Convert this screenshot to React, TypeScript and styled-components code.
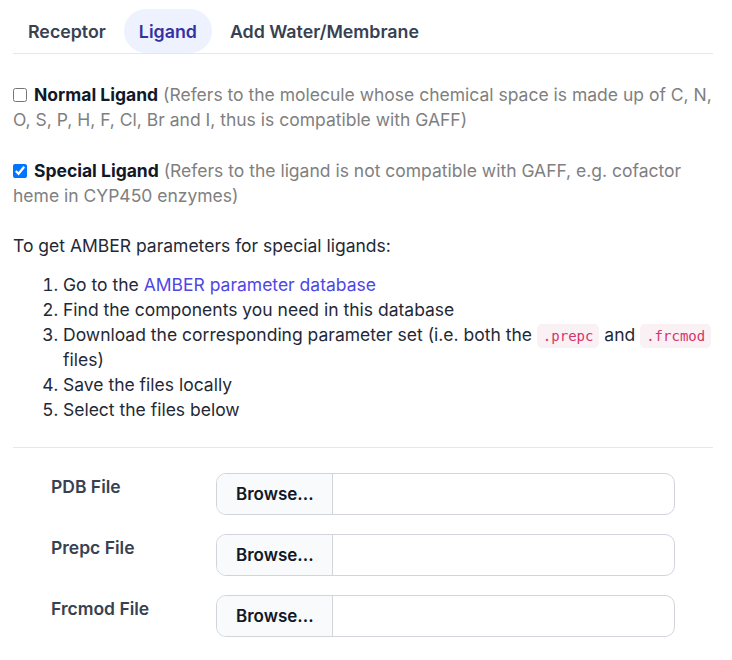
import React from "react";
import styled, { createGlobalStyle } from "styled-components";

const Global = createGlobalStyle`
  html, body { margin: 0; padding: 0; background: #fff; }
  body { font-family: Inter, "Noto Sans", sans-serif; color: #1f2937; }
`;

const Page = styled.div`
  padding: 9px 17px 0 13px;
  font-size: 17.5px;
  line-height: 25px;
`;

const TabList = styled.div`
  display: flex;
  gap: 3px;
  margin-right: 2px;
  border-bottom: 1px solid #e5e7eb;
`;

const Tab = styled.div<{ $active?: boolean }>`
  height: 44px;
  padding: 1px 15px 0;
  box-sizing: border-box;
  display: flex;
  align-items: center;
  border-radius: 22px;
  font-weight: 600;
  font-size: 17.8px;
  color: ${(p) => (p.$active ? "#3730a3" : "#374151")};
  background: ${(p) => (p.$active ? "#eef2ff" : "transparent")};
`;

const Option = styled.p<{ $top: number }>`
  margin: ${(p) => p.$top}px 0 0;
  color: #808080;
`;

const Check = styled.input`
  width: 14px;
  height: 14px;
  margin: 0 7px 0 0;
  vertical-align: -1px;
`;

const Strong = styled.strong`
  font-weight: 700;
  color: #111827;
`;

const Intro = styled.p`
  margin: 25px 0 0;
  color: #1f2937;
`;

const Steps = styled.ol`
  margin: 14px 0 0;
  padding-left: 50px;
  color: #1f2937;
`;

const Link = styled.a`
  color: #4f46e5;
  text-decoration: none;
`;

const Code = styled.code`
  font-family: "DejaVu Sans Mono", "Liberation Mono", monospace;
  font-size: 14px;
  line-height: 1;
  color: #d6336c;
  background: #f9f1f4;
  border-radius: 5px;
  padding: 4px 6px;
  white-space: nowrap;
`;

const Divider = styled.hr`
  border: 0;
  border-top: 1px solid #e5e7eb;
  margin: 25px 2px 0 0;
`;

const Form = styled.div`
  padding: 25px 40px 0 38px;
  display: grid;
  grid-template-columns: 165px 1fr;
  row-gap: 19px;
`;

const Label = styled.label`
  font-weight: 600;
  color: #374151;
  padding-top: 1px;
`;

const FileBox = styled.div`
  display: flex;
  height: 42px;
  border: 1px solid #d1d5db;
  border-radius: 10px;
  overflow: hidden;
  box-sizing: border-box;
`;

const Browse = styled.div`
  width: 116px;
  box-sizing: border-box;
  padding-left: 19px;
  display: flex;
  align-items: center;
  background: #f9fafb;
  border-right: 1px solid #d1d5db;
  font-weight: 600;
  font-size: 17px;
  color: #111827;
`;

const files = ["PDB File", "Prepc File", "Frcmod File"];

export default function App() {
  return (
    <>
      <Global />
      <Page>
        <TabList>
          <Tab>Receptor</Tab>
          <Tab $active>Ligand</Tab>
          <Tab>Add Water/Membrane</Tab>
        </TabList>
        <Option $top={28}>
          <Check type="checkbox" readOnly />
          <Strong>Normal Ligand</Strong> (Refers to the molecule whose chemical space is made up of C, N,
          O, S, P, H, F, Cl, Br and I, thus is compatible with GAFF)
        </Option>
        <Option $top={26}>
          <Check type="checkbox" defaultChecked />
          <Strong>Special Ligand</Strong> (Refers to the ligand is not compatible with GAFF, e.g. cofactor
          heme in CYP450 enzymes)
        </Option>
        <Intro>To get AMBER parameters for special ligands:</Intro>
        <Steps>
          <li>
            Go to the <Link href="#">AMBER parameter database</Link>
          </li>
          <li>Find the components you need in this database</li>
          <li>
            Download the corresponding parameter set (i.e. both the <Code>.prepc</Code> and{" "}
            <Code>.frcmod</Code> files)
          </li>
          <li>Save the files locally</li>
          <li>Select the files below</li>
        </Steps>
        <Divider />
        <Form>
          {files.map((f) => (
            <React.Fragment key={f}>
              <Label>{f}</Label>
              <FileBox>
                <Browse>Browse...</Browse>
              </FileBox>
            </React.Fragment>
          ))}
        </Form>
      </Page>
    </>
  );
}
